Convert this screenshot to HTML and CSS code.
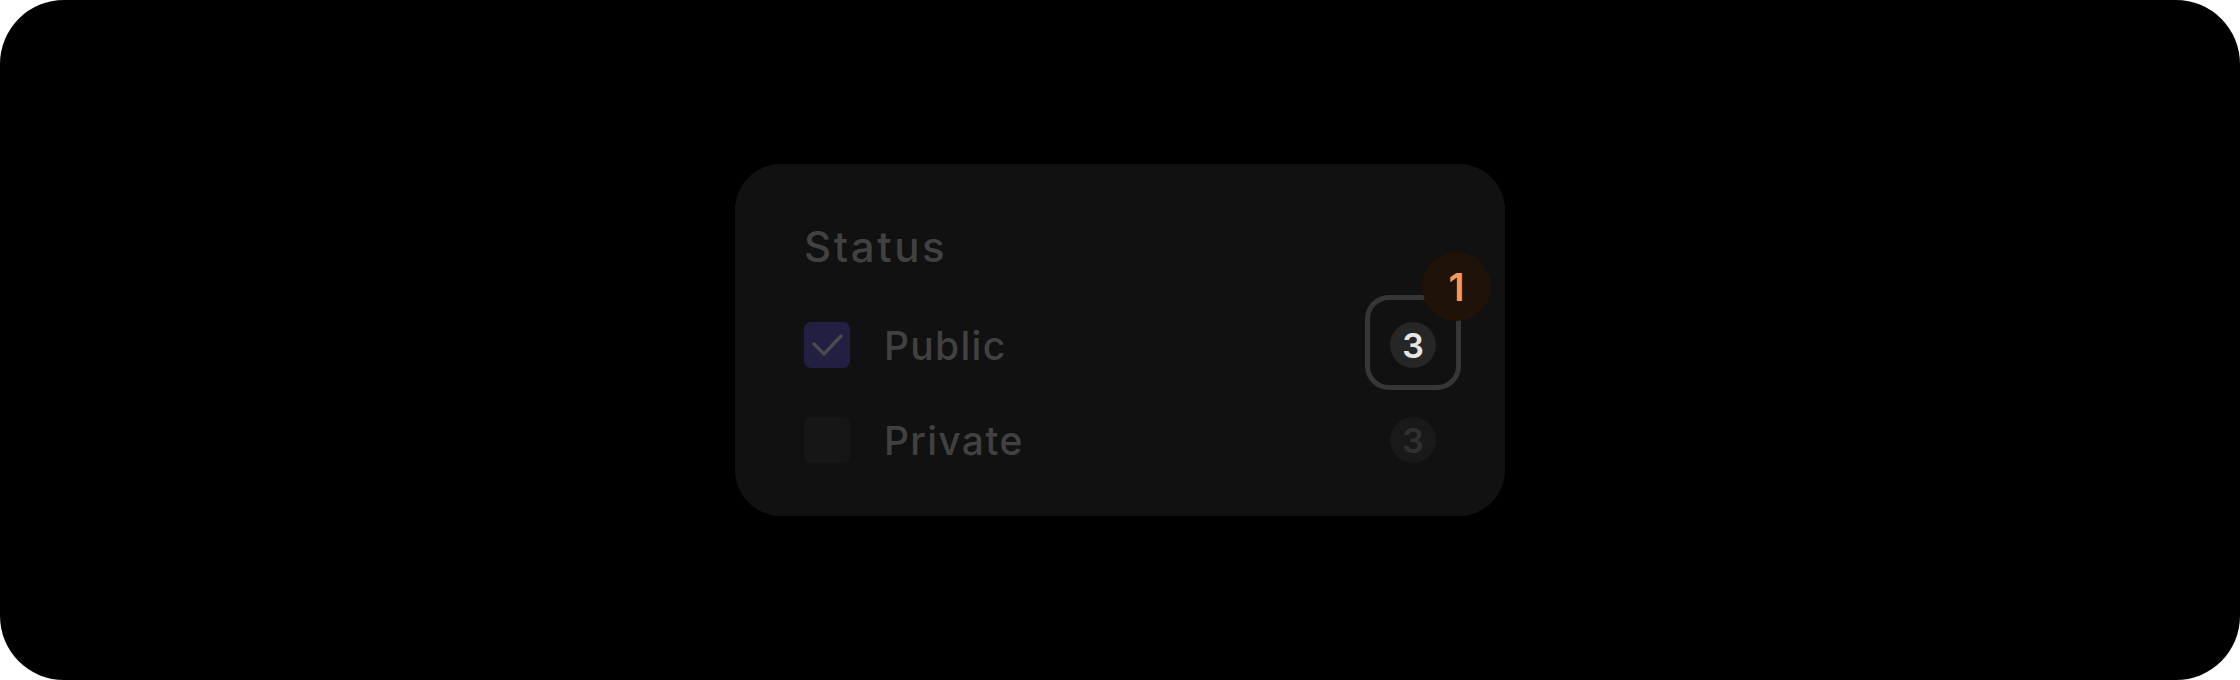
FILE: index.html
```html
<!DOCTYPE html>
<html lang="en">
<head>
<meta charset="utf-8">
<title>Status filter</title>
<link rel="stylesheet" href="styles.css">
</head>
<body>
<div class="frame">
  <section class="card">
    <h2 class="title">Status</h2>
    <ul class="options">
      <li class="option">
        <span class="check check-on">
          <svg viewBox="0 0 46 46" width="46" height="46"><polyline points="10,22 20,32 37,14" fill="none" stroke="#4a4a4a" stroke-width="3.5" stroke-linecap="round" stroke-linejoin="round"/></svg>
        </span>
        <span class="label">Public</span>
        <span class="count-wrap">
          <span class="ring"></span>
          <span class="count count-on">3</span>
          <span class="badge">1</span>
        </span>
      </li>
      <li class="option">
        <span class="check"></span>
        <span class="label">Private</span>
        <span class="count-wrap">
          <span class="count">3</span>
        </span>
      </li>
    </ul>
  </section>
</div>
</body>
</html>
```

FILE: styles.css
```css
html, body {
  margin: 0;
  padding: 0;
  background: #ffffff;
}
body {
  font-family: "Inter", "Noto Sans", sans-serif;
}
.frame {
  width: 2240px;
  height: 680px;
  background: #000000;
  border-radius: 64px;
  display: flex;
  align-items: center;
  justify-content: center;
}
.card {
  width: 770px;
  box-sizing: border-box;
  padding: 59px 69px 53px 69px;
  background: #111111;
  border-radius: 46px;
}
.title {
  margin: 0;
  font-size: 42px;
  line-height: 48px;
  font-weight: 500;
  letter-spacing: 2.6px;
  color: #414141;
}
.options {
  list-style: none;
  margin: 51px 0 0 0;
  padding: 0;
  display: flex;
  flex-direction: column;
  gap: 49px;
}
.option {
  height: 46px;
  display: flex;
  align-items: center;
}
.check {
  width: 46px;
  height: 46px;
  border-radius: 7px;
  background: #161616;
  flex: none;
}
.check svg {
  display: block;
}
.check-on {
  background: #211f42;
}
.label {
  margin-left: 34px;
  font-size: 39px;
  font-weight: 500;
  letter-spacing: 1.3px;
  color: #414141;
  flex: 1;
}
.count-wrap {
  position: relative;
  width: 46px;
  height: 46px;
  flex: none;
}
.count {
  width: 46px;
  height: 46px;
  border-radius: 50%;
  background: #191919;
  color: #303030;
  font-size: 34px;
  font-weight: 600;
  display: flex;
  align-items: center;
  justify-content: center;
}
.count-on {
  background: #262626;
  color: #e6e6e6;
}
.ring {
  position: absolute;
  left: -25px;
  top: -27px;
  width: 86px;
  height: 85px;
  border: 5px solid #363636;
  border-radius: 24px;
}
.badge {
  position: absolute;
  left: 32px;
  top: -70px;
  width: 69px;
  height: 69px;
  border-radius: 50%;
  background: #1f1209;
  color: #f2985b;
  font-size: 38px;
  font-weight: 600;
  display: flex;
  align-items: center;
  justify-content: center;
}
```
